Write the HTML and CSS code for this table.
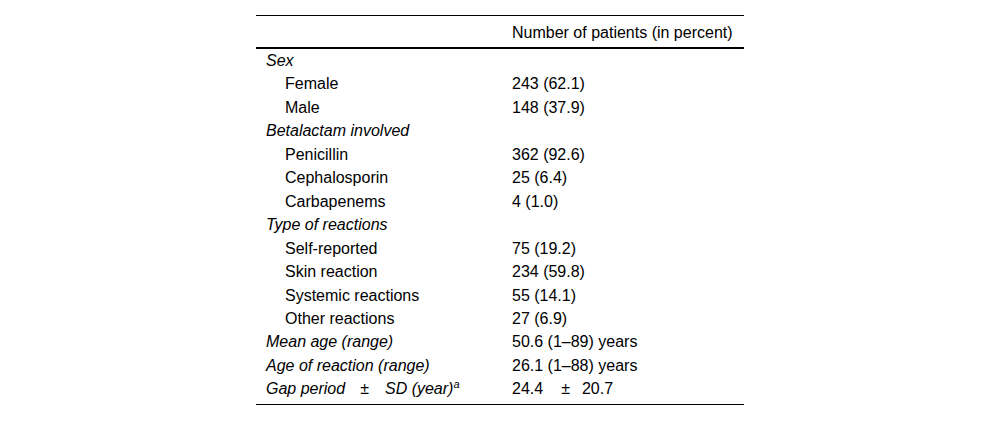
FILE: index.html
```html
<!DOCTYPE html>
<html>
<head>
<meta charset="utf-8">
<link rel="stylesheet" href="styles.css">
</head>
<body>
<table class="data">
  <colgroup><col class="col1"><col class="col2"></colgroup>
  <thead>
    <tr><th class="c1"></th><th class="c2">Number of patients (in percent)</th></tr>
  </thead>
  <tbody>
    <tr class="first"><td class="c1 grp">Sex</td><td class="c2"></td></tr>
    <tr><td class="c1 sub">Female</td><td class="c2">243 (62.1)</td></tr>
    <tr><td class="c1 sub">Male</td><td class="c2">148 (37.9)</td></tr>
    <tr><td class="c1 grp">Betalactam involved</td><td class="c2"></td></tr>
    <tr><td class="c1 sub">Penicillin</td><td class="c2">362 (92.6)</td></tr>
    <tr><td class="c1 sub">Cephalosporin</td><td class="c2">25 (6.4)</td></tr>
    <tr><td class="c1 sub">Carbapenems</td><td class="c2">4 (1.0)</td></tr>
    <tr><td class="c1 grp">Type of reactions</td><td class="c2"></td></tr>
    <tr><td class="c1 sub">Self-reported</td><td class="c2">75 (19.2)</td></tr>
    <tr><td class="c1 sub">Skin reaction</td><td class="c2">234 (59.8)</td></tr>
    <tr><td class="c1 sub">Systemic reactions</td><td class="c2">55 (14.1)</td></tr>
    <tr><td class="c1 sub">Other reactions</td><td class="c2">27 (6.9)</td></tr>
    <tr><td class="c1 grp">Mean age (range)</td><td class="c2">50.6 (1–89) years</td></tr>
    <tr><td class="c1 grp">Age of reaction (range)</td><td class="c2">26.1 (1–88) years</td></tr>
    <tr class="last"><td class="c1 grp">Gap period<span class="pm pm-label">±</span>SD (year)<sup class="fn">a</sup></td><td class="c2">24.4<span class="pm pm-value">±</span>20.7</td></tr>
  </tbody>
</table>
</body>
</html>
```
FILE: styles.css
```css
html, body {
  margin: 0;
  padding: 0;
  background: #fff;
}
body {
  font-family: "Liberation Sans", Arial, sans-serif;
  font-size: 16px;
  color: #000;
}
.data {
  border-collapse: collapse;
  table-layout: fixed;
  margin: 15px 0 0 256px;
  width: 488px;
  border-top: 1px solid #000;
  border-bottom: 1px solid #000;
}
.col1 {
  width: 256px;
}
.col2 {
  width: 232px;
}
.data th {
  font-weight: normal;
  text-align: left;
  padding: 8px 0 4.6px 0;
  border-bottom: 2px solid #000;
  line-height: 18.4px;
  white-space: nowrap;
}
.data td {
  padding: 0;
  line-height: 23.45px;
  text-align: left;
  vertical-align: top;
  white-space: nowrap;
}
.data .c1 {
  padding-left: 10px;
}
.data .sub {
  padding-left: 29px;
}
.grp {
  font-style: italic;
}
.data .last td {
  padding-bottom: 3px;
}
.pm {
  font-style: normal;
  display: inline-block;
}
.pm-label {
  margin: 0 16px 0 15px;
}
.pm-value {
  margin: 0 12px 0 18px;
}
.fn {
  font-size: 11px;
  line-height: 0;
  vertical-align: 6px;
}
```
